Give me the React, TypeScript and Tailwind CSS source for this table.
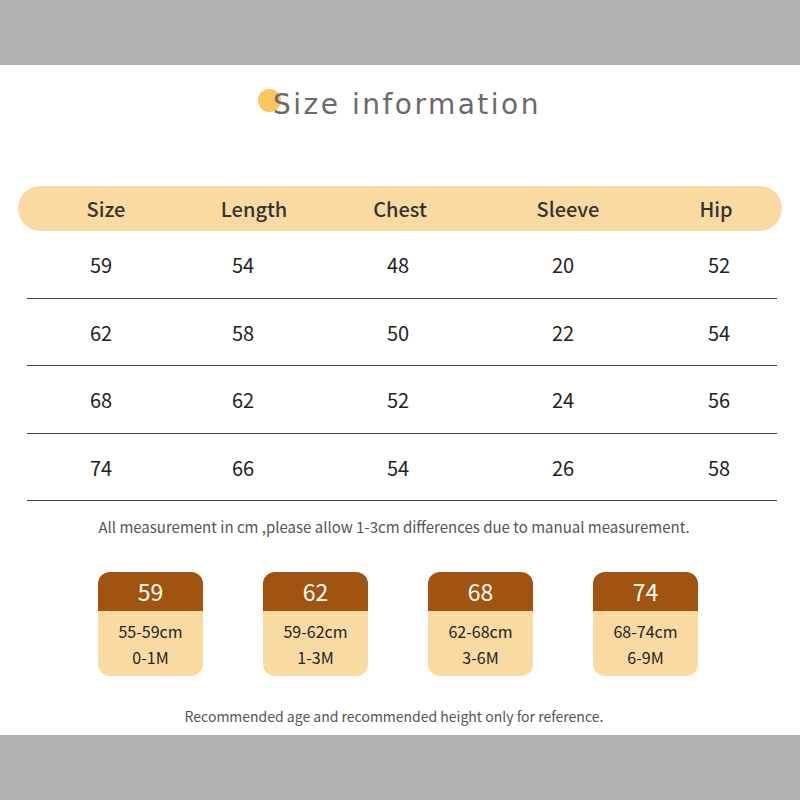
import React from 'react'

const headers = [
  { label: 'Size', x: 'w-[176px]' },
  { label: 'Length', x: 'w-[120px]' },
  { label: 'Chest', x: 'w-[172px]' },
  { label: 'Sleeve', x: 'w-[164px]' },
  { label: 'Hip', x: 'w-[132px]' },
]

const rows = [
  ['59', '54', '48', '20', '52'],
  ['62', '58', '50', '22', '54'],
  ['68', '62', '52', '24', '56'],
  ['74', '66', '54', '26', '58'],
]

const colWidths = ['w-[148px]', 'w-[136px]', 'w-[174px]', 'w-[156px]', 'w-[156px]']

const cards = [
  { size: '59', cm: '55-59cm', age: '0-1M' },
  { size: '62', cm: '59-62cm', age: '1-3M' },
  { size: '68', cm: '62-68cm', age: '3-6M' },
  { size: '74', cm: '68-74cm', age: '6-9M' },
]

const App: React.FC = () => {
  return (
    <div
      className="w-[800px] h-[800px] bg-[#b2b2b2] flex flex-col"
      style={{ fontFamily: '"Noto Sans CJK SC", "Noto Sans", sans-serif' }}
    >
      <div className="h-[65px]" />
      <div className="h-[670px] bg-white flex flex-col">
        {/* title */}
        <div className="h-[80px] flex items-center justify-center pl-[14px]">
          <div className="relative flex items-center">
            <span className="absolute left-[-15px] top-[5px] w-[23px] h-[23px] rounded-full bg-[#f9c75a]" />
            <span
              className="relative text-[28px] text-[#6a6a6a] tracking-[2.5px]"
              style={{ fontFamily: '"DejaVu Sans", sans-serif' }}
            >
              Size information
            </span>
          </div>
        </div>

        {/* header pill */}
        <div className="mt-[41px] mx-[18px] h-[45px] rounded-full bg-[#f9dba2] flex items-center text-[20px] font-medium text-[#333]">
          {headers.map((h, i) => (
            <div key={i} className={`${h.x} shrink-0 text-center`}>
              {h.label}
            </div>
          ))}
        </div>

        {/* rows */}
        <div className="mx-[27px] w-[750px] flex flex-col overflow-hidden">
          {rows.map((r, ri) => (
            <div key={ri} className="h-[67.5px] pt-[2px] border-b border-[#444] flex items-center text-[20px] text-[#222]">
              {r.map((c, ci) => (
                <div key={ci} className={`${colWidths[ci]} shrink-0 text-center`}>
                  {c}
                </div>
              ))}
            </div>
          ))}
        </div>

        <div className="mt-[15px] text-center text-[15px] text-[#555] pr-[12px]">
          All measurement in cm ,please allow 1-3cm differences due to manual measurement.
        </div>

        {/* cards */}
        <div className="mt-[33px] pl-[98px] flex gap-[60px]">
          {cards.map((c) => (
            <div key={c.size} className="w-[105px] h-[104px] rounded-[12px] overflow-hidden flex flex-col bg-[#f9dba2]">
              <div className="h-[39px] bg-[#a0540f] text-white text-[23px] flex items-center justify-center">
                {c.size}
              </div>
              <div className="flex-1 flex flex-col items-center pt-[7px] text-[16px] text-[#222] leading-[26px]">
                <div>{c.cm}</div>
                <div>{c.age}</div>
              </div>
            </div>
          ))}
        </div>

        <div className="mt-[30px] text-center text-[14px] text-[#555] pr-[12px]">
          Recommended age and recommended height only for reference.
        </div>
      </div>
    </div>
  )
}

export default App
